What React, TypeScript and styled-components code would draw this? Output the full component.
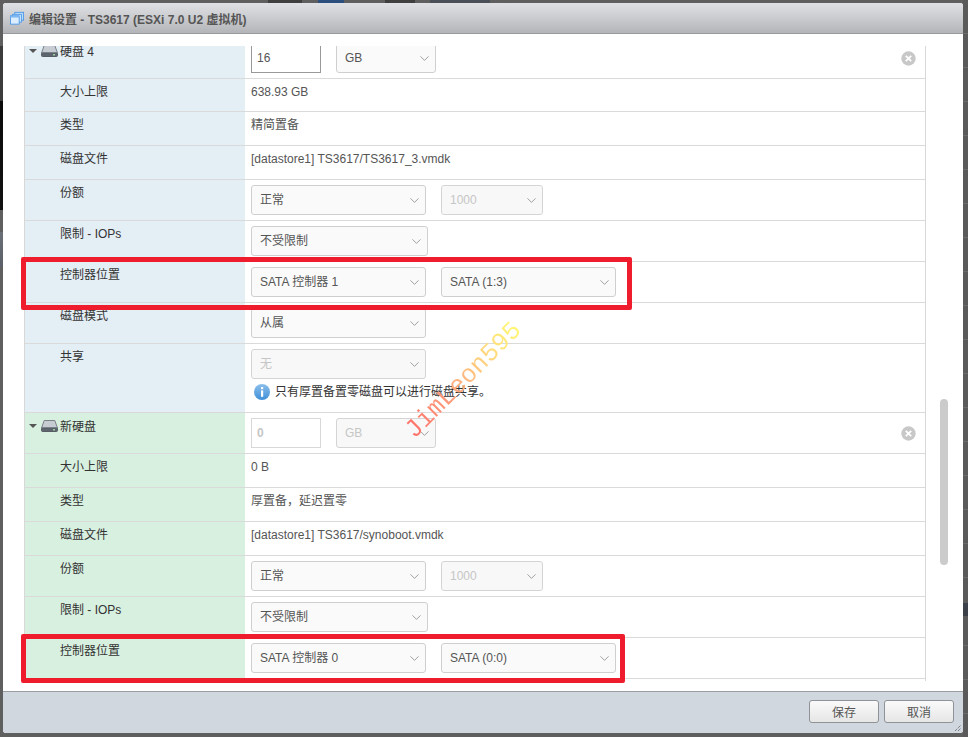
import React from "react";
import styled, { createGlobalStyle } from "styled-components";
import { ChevronDown } from "lucide-react";

const Global = createGlobalStyle`
  html, body { margin: 0; padding: 0; height: 100%; }
  body { font-family: "Liberation Sans", "Noto Sans CJK SC", sans-serif; font-size: 12px; overflow: hidden; }
`;

const Page = styled.div`
  position: relative;
  width: 968px;
  height: 737px;
  box-sizing: border-box;
  padding: 3px 5px 4px 3px;
  background:
    linear-gradient(#2c4f80, #2c4f80) 318px 0 / 26px 3px no-repeat,
    linear-gradient(#3f3f3f, #3f3f3f) 268px 0 / 34px 3px no-repeat,
    linear-gradient(#3f3f3f, #3f3f3f) 385px 0 / 30px 3px no-repeat,
    linear-gradient(#4a4f58, #4a4f58) 430px 0 / 60px 3px no-repeat,
    linear-gradient(#3c4048, #3c4048) 100% 603px / 5px 13px no-repeat,
    linear-gradient(#3c3c3c, #3c3c3c) 0 46px / 4px 55px no-repeat,
    linear-gradient(#0b0b0b, #111) 0 100px / 4px 110px no-repeat,
    linear-gradient(#6a6f78, #5c6068) 0 232px / 4px 35px no-repeat,
    repeating-linear-gradient(#5a5a5a 0 33px, #6c6c6c 33px 34px) 100% 0 / 5px 100% no-repeat,
    #5f5f5f;
`;

const Modal = styled.div`
  height: 100%;
  display: flex;
  flex-direction: column;
  border-radius: 3px;
  overflow: hidden;
  background: #fff;
`;

const TitleBar = styled.div`
  flex: 0 0 30px;
  display: flex;
  align-items: center;
  gap: 5px;
  padding-left: 7px;
  border-bottom: 1px solid #98999c;
  background: linear-gradient(#e0e1e4, #b4b5b8);
`;

const TitleText = styled.span`
  font-size: 12px;
  font-weight: bold;
  color: #555;
  font-family: "Liberation Sans", "Noto Sans CJK SC", sans-serif;
`;

const Body = styled.div`
  position: relative;
  flex: 1;
  padding-top: 12px;
  overflow: hidden;
`;

const Scroller = styled.div`
  height: 645px;
  box-sizing: border-box;
  padding-left: 21px;
  overflow: hidden;
`;

const Table = styled.div`
  margin-top: -8px;
  width: 902px;
  box-sizing: border-box;
  padding-bottom: 2px;
  border-left: 1px solid #d8d8d8;
  border-right: 1px solid #d8d8d8;
`;

const Row = styled.div<{ $h: number }>`
  position: relative;
  display: flex;
  height: ${(p) => p.$h}px;
  box-sizing: border-box;
  border-bottom: 1px solid #dadada;
`;

const LabelCell = styled.div<{ $tone: "blue" | "green"; $head?: boolean }>`
  flex: 0 0 220px;
  box-sizing: border-box;
  display: flex;
  align-items: flex-start;
  padding: ${(p) => (p.$head ? "6px 0 0 4px" : "5px 0 0 35px")};
  line-height: 16px;
  color: #333;
  background: ${(p) => (p.$tone === "blue" ? "#e3eef5" : "#d8f0e0")};
`;

const ValueCell = styled.div`
  flex: 1;
  min-width: 0;
  display: flex;
  flex-direction: column;
  padding: 5px 0 0 6px;
`;

const ValueText = styled.div`
  margin-top: 1px;
  color: #555;
  line-height: 14px;
`;

const Controls = styled.div`
  display: flex;
  align-items: flex-start;
  gap: 15px;
`;

const SelectBox = styled.div<{ $w: number; $disabled?: boolean }>`
  width: ${(p) => p.$w}px;
  height: 30px;
  box-sizing: border-box;
  display: flex;
  align-items: center;
  justify-content: space-between;
  padding: 0 3px 0 8px;
  border: 1px solid ${(p) => (p.$disabled ? "#d4d4d4" : "#cfcfcf")};
  border-radius: 3px;
  background: ${(p) => (p.$disabled ? "#f8f8f8" : "#fafafa")};
  color: ${(p) => (p.$disabled ? "#c6c6c6" : "#555")};
  & svg { color: #8a8a8a; flex: none; }
`;

const SelectText = styled.span`
  line-height: 14px;
  height: 14px;
`;

const NumberBox = styled.div<{ $disabled?: boolean }>`
  width: 70px;
  height: 30px;
  box-sizing: border-box;
  display: flex;
  align-items: center;
  padding-left: 5px;
  background: #fff;
  border: 1px solid ${(p) => (p.$disabled ? "#d8d8d8" : "#999")};
  color: ${(p) => (p.$disabled ? "#c6c6c6" : "#555")};
  font-weight: ${(p) => (p.$disabled ? "bold" : "normal")};
`;

const Caret = styled.span`
  width: 0;
  height: 0;
  margin: 5px 4px 0 0;
  border-left: 4px solid transparent;
  border-right: 4px solid transparent;
  border-top: 4px solid #555;
`;

const DiskIconWrap = styled.span`
  display: flex;
  padding-top: 1px;
`;

const DiskName = styled.span`
  margin-left: 2px;
`;

const RemoveSlot = styled.div`
  flex: 1;
  display: flex;
  justify-content: flex-end;
  padding: 8px 9px 0 0;
`;

const Note = styled.div`
  display: flex;
  align-items: center;
  gap: 5px;
  margin: 5px 0 0 3px;
  color: #333;
  line-height: 16px;
`;

const RedBox = styled.div<{ $top: number; $w: number; $h: number }>`
  position: absolute;
  z-index: 2;
  left: -4px;
  top: ${(p) => p.$top}px;
  width: ${(p) => p.$w}px;
  height: ${(p) => p.$h}px;
  box-sizing: border-box;
  border: 5px solid #ee1c2c;
  border-radius: 2px;
`;

const Footer = styled.div`
  flex: 0 0 42px;
  box-sizing: border-box;
  position: relative;
  display: flex;
  justify-content: flex-end;
  gap: 5px;
  padding: 8px 9px 0 0;
  border-top: 1px solid #9a9c9f;
  background: #d0d7df;
`;

const Button = styled.div`
  width: 70px;
  height: 23px;
  box-sizing: border-box;
  display: flex;
  align-items: center;
  justify-content: center;
  border: 1px solid #8f9296;
  border-radius: 3px;
  background: linear-gradient(#fafafa, #e6e6e6);
  color: #555;
`;

const Grip = styled.svg`
  position: absolute;
  right: 1px;
  bottom: 1px;
`;

const Scrollbar = styled.div`
  position: absolute;
  left: 937px;
  top: 365px;
  width: 8px;
  height: 166px;
  border-radius: 4px;
  background: #cbcbcb;
`;

const Watermark = styled.div`
  position: absolute;
  left: 379px;
  top: 365px;
  width: 170px;
  text-align: center;
  transform: rotate(-45deg);
  font-family: "Liberation Mono", monospace;
  font-size: 25.5px;
  line-height: 32px;
  white-space: nowrap;
  color: transparent;
  background: linear-gradient(90deg, #ff6464 0%, #ff9a7a 35%, #ffcf80 65%, #ffff70 100%);
  -webkit-background-clip: text;
  background-clip: text;
`;

const VmIcon = () => (
  <svg width="14" height="14" viewBox="0 0 16 16">
    <rect x="5.5" y="1.5" width="10" height="9" fill="#bcdcf8" stroke="#4a97e8" />
    <rect x="3" y="3.8" width="10" height="9" fill="#cfe6fb" stroke="#4a97e8" />
    <rect x="0.5" y="5.5" width="10" height="9.5" fill="#dceefe" stroke="#4a97e8" />
    <rect x="0.5" y="5.5" width="10" height="2" fill="#7db8f2" />
  </svg>
);

const DiskIcon = () => (
  <svg width="17" height="12" viewBox="0 0 17 12">
    <path d="M3.2 .5h10.6l2.7 7.5H.5z" fill="#c6ccd2" stroke="#7b8088" />
    <rect x=".5" y="8" width="16" height="3.5" rx="1" fill="#5e656e" stroke="#565c64" />
    <rect x="12" y="9" width="2" height="1.5" fill="#9fd0a0" />
  </svg>
);

const InfoIcon = () => (
  <svg width="16" height="16" viewBox="0 0 16 16">
    <defs>
      <linearGradient id="info" x1="0" y1="0" x2="0" y2="1">
        <stop offset="0" stopColor="#8cc0ec" />
        <stop offset="1" stopColor="#3f8fd8" />
      </linearGradient>
    </defs>
    <circle cx="8" cy="8" r="8" fill="url(#info)" />
    <rect x="7" y="3" width="2.2" height="2.2" fill="#fff" />
    <rect x="7" y="6.4" width="2.2" height="6.4" fill="#fff" />
  </svg>
);

const RemoveIcon = () => (
  <svg width="15" height="15" viewBox="0 0 15 15">
    <circle cx="7.5" cy="7.5" r="7.2" fill="#c8c8c8" />
    <path d="M4.8 4.8l5.4 5.4M10.2 4.8l-5.4 5.4" stroke="#fff" strokeWidth="1.8" />
  </svg>
);

const Select = ({ w, text, disabled }: { w: number; text: string; disabled?: boolean }) => (
  <SelectBox $w={w} $disabled={disabled}>
    <SelectText>{text}</SelectText>
    <ChevronDown size={15} strokeWidth={1.3} />
  </SelectBox>
);

type Tone = "blue" | "green";

const Label = ({ tone, text }: { tone: Tone; text: string }) => (
  <LabelCell $tone={tone}>{text}</LabelCell>
);

const DiskHead = ({ tone, name, size, disabled }: { tone: Tone; name: string; size: string; disabled?: boolean }) => (
  <Row $h={41}>
    <LabelCell $tone={tone} $head>
      <Caret />
      <DiskIconWrap><DiskIcon /></DiskIconWrap>
      <DiskName>{name}</DiskName>
    </LabelCell>
    <ValueCell>
      <Controls>
        <NumberBox $disabled={disabled}>{size}</NumberBox>
        <Select w={100} text="GB" disabled={disabled} />
        <RemoveSlot><RemoveIcon /></RemoveSlot>
      </Controls>
    </ValueCell>
  </Row>
);

const TextRow = ({ tone, label, value, h = 34 }: { tone: Tone; label: string; value: string; h?: number }) => (
  <Row $h={h}>
    <Label tone={tone} text={label} />
    <ValueCell>
      <ValueText>{value}</ValueText>
    </ValueCell>
  </Row>
);

const ShareRow = ({ tone }: { tone: Tone }) => (
  <Row $h={41}>
    <Label tone={tone} text="份额" />
    <ValueCell>
      <Controls>
        <Select w={175} text="正常" />
        <Select w={102} text="1000" disabled />
      </Controls>
    </ValueCell>
  </Row>
);

const LimitRow = ({ tone }: { tone: Tone }) => (
  <Row $h={41}>
    <Label tone={tone} text="限制 - IOPs" />
    <ValueCell>
      <Controls>
        <Select w={177} text="不受限制" />
      </Controls>
    </ValueCell>
  </Row>
);

const ControllerRow = ({ tone, a, b, boxW, boxTop, boxH }: { tone: Tone; a: string; b: string; boxW: number; boxTop: number; boxH: number }) => (
  <Row $h={41}>
    <Label tone={tone} text="控制器位置" />
    <ValueCell>
      <Controls>
        <Select w={175} text={a} />
        <Select w={175} text={b} />
      </Controls>
    </ValueCell>
    <RedBox $top={boxTop} $w={boxW} $h={boxH} />
  </Row>
);

export default function App() {
  return (
    <Page>
      <Global />
      <Modal>
        <TitleBar>
          <VmIcon />
          <TitleText>编辑设置 - TS3617 (ESXi 7.0 U2 虚拟机)</TitleText>
        </TitleBar>
        <Body>
          <Scroller>
            <Table>
              <DiskHead tone="blue" name="硬盘 4" size="16" />
              <TextRow tone="blue" label="大小上限" value="638.93 GB" h={33} />
              <TextRow tone="blue" label="类型" value="精简置备" />
              <TextRow tone="blue" label="磁盘文件" value="[datastore1] TS3617/TS3617_3.vmdk" />
              <ShareRow tone="blue" />
              <LimitRow tone="blue" />
              <ControllerRow tone="blue" a="SATA 控制器 1" b="SATA (1:3)" boxW={611} boxTop={-5} boxH={53} />
              <Row $h={41}>
                <Label tone="blue" text="磁盘模式" />
                <ValueCell>
                  <Controls>
                    <Select w={175} text="从属" />
                  </Controls>
                </ValueCell>
              </Row>
              <Row $h={69}>
                <Label tone="blue" text="共享" />
                <ValueCell>
                  <Controls>
                    <Select w={175} text="无" disabled />
                  </Controls>
                  <Note>
                    <InfoIcon />
                    <span>只有厚置备置零磁盘可以进行磁盘共享。</span>
                  </Note>
                </ValueCell>
              </Row>
              <DiskHead tone="green" name="新硬盘" size="0" disabled />
              <TextRow tone="green" label="大小上限" value="0 B" />
              <TextRow tone="green" label="类型" value="厚置备，延迟置零" />
              <TextRow tone="green" label="磁盘文件" value="[datastore1] TS3617/synoboot.vmdk" />
              <ShareRow tone="green" />
              <LimitRow tone="green" />
              <ControllerRow tone="green" a="SATA 控制器 0" b="SATA (0:0)" boxW={604} boxTop={-4} boxH={49} />
            </Table>
          </Scroller>
          <Scrollbar />
        </Body>
        <Footer>
          <Button>保存</Button>
          <Button>取消</Button>
          <Grip width="8" height="8" viewBox="0 0 8 8">
            <path d="M1 7l6-6M4 7l3-3M7 7h0" stroke="#555" strokeWidth="1" strokeDasharray="1 1" fill="none" />
          </Grip>
        </Footer>
      </Modal>
      <Watermark>JimLeon595</Watermark>
    </Page>
  );
}
